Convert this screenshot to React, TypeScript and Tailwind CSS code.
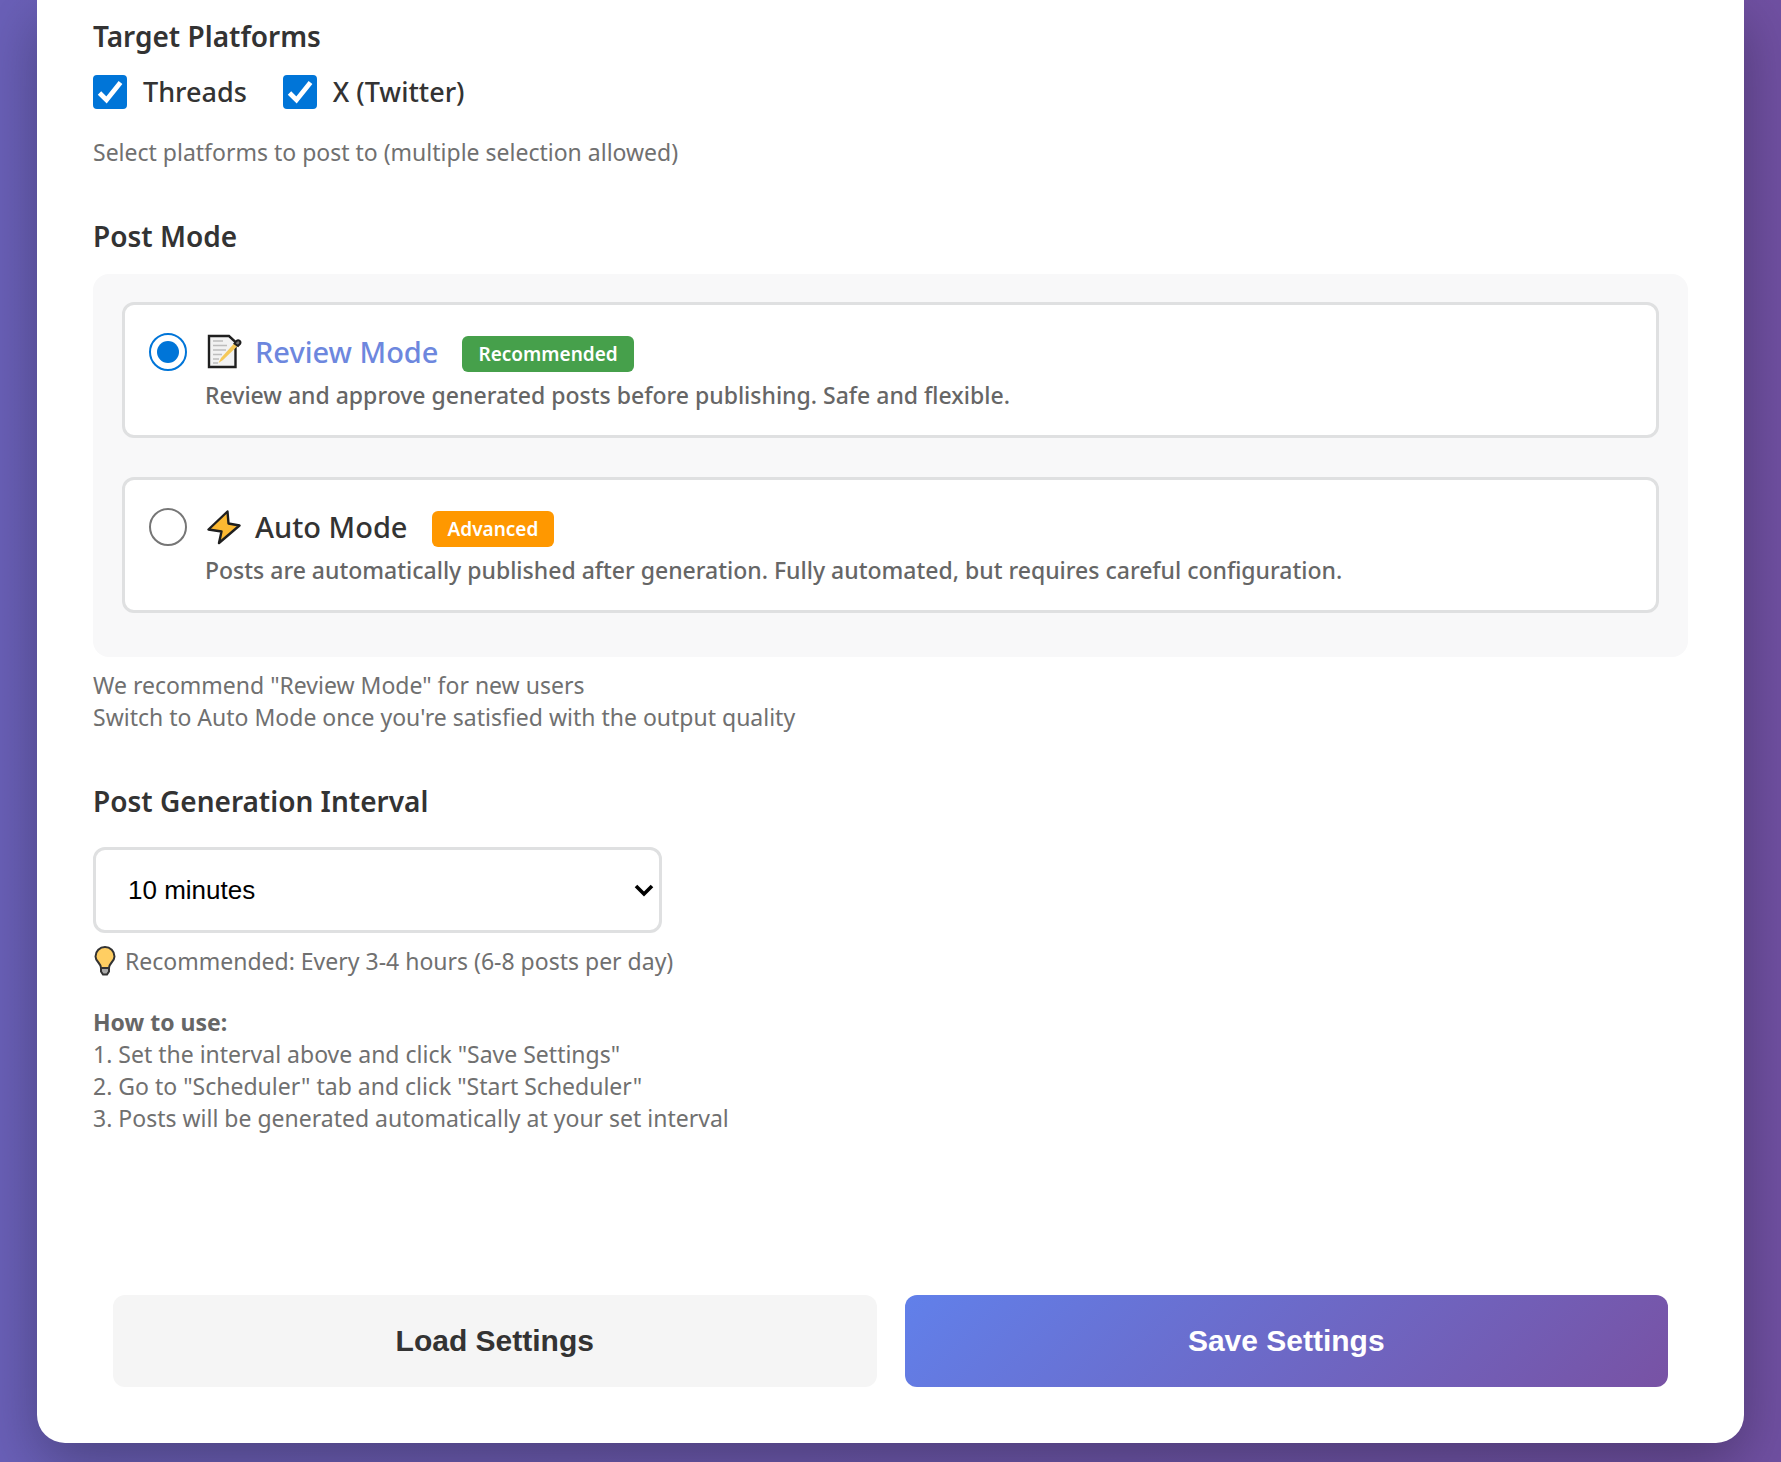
import { useState } from "react";
import type { ReactNode } from "react";

const HOW_TO_STEPS = [
  'Set the interval above and click "Save Settings"',
  'Go to "Scheduler" tab and click "Start Scheduler"',
  "Posts will be generated automatically at your set interval",
];

function MemoIcon() {
  return (
    <svg viewBox="0 0 36 36" className="ml-0.5 h-9 w-9 shrink-0" aria-hidden="true">
      <path d="M2 2h20l6.500 6v25H2z" fill="#f2f2f2" stroke="#1f1f1f" strokeWidth="2.400" />
      <path d="M6 7h10M6 11.500h14M6 16h13M6 20.500h9M6 25h6M6 29h5" stroke="#bdbdbd" strokeWidth="1.300" />
      <path d="M11.500 29l2.500-5L27.500 9l3 3L16 26z" fill="#f5c857" />
      <path
        d="M27.500 9.500l2-2.500c2-2 5 .5 3.500 3L31 12z"
        fill="#777"
        stroke="#1f1f1f"
        strokeWidth="2"
      />
    </svg>
  );
}

function BoltIcon() {
  return (
    <svg viewBox="0 0 36 36" className="ml-0.5 h-9 w-9 shrink-0" aria-hidden="true">
      <path
        d="M20.500 2.500L1.500 20.500l13 2L12 34 32.500 16.500 21.500 14.500z"
        fill="#fcb932"
        stroke="#1f1f1f"
        strokeWidth="2.400"
        strokeLinejoin="round"
      />
    </svg>
  );
}

function BulbIcon() {
  return (
    <svg viewBox="0 0 24 30" className="h-[30px] w-6 shrink-0" aria-hidden="true">
      <path d="M8 20h8v5.500l-2 3h-4l-2-3z" fill="#aaa" stroke="#333" strokeWidth="2" />
      <path
        d="M8 22C8 17 2.500 15.500 2.500 10.500a9.500 9.500 0 0 1 19 0C21.500 15.500 16 17 16 22z"
        fill="#ffce62"
        stroke="#333"
        strokeWidth="2"
      />
    </svg>
  );
}

function PlatformCheckbox({ label }: { label: string }) {
  const [checked, setChecked] = useState(true);

  return (
    <label className="flex items-center gap-4 text-[27px] leading-9 font-medium text-[#333]">
      <span className="grid h-[34px] w-[34px]">
        <input
          type="checkbox"
          checked={checked}
          onChange={(e) => setChecked(e.target.checked)}
          className="peer col-start-1 row-start-1 appearance-none rounded border-2 border-[#767676] checked:border-[#0075d8] checked:bg-[#0075d8]"
        />
        <svg
          viewBox="0 0 34 34"
          className="pointer-events-none invisible col-start-1 row-start-1 peer-checked:visible"
          aria-hidden="true"
        >
          <path d="M6.500 18l7 7L27.500 7.500" fill="none" stroke="#fff" strokeWidth="4.800" />
        </svg>
      </span>
      {label}
    </label>
  );
}

interface ModeOptionProps {
  value: string;
  title: string;
  description: string;
  icon: ReactNode;
  badge: string;
  badgeClass: string;
  titleClass: string;
  selected: string;
  onSelect: (value: string) => void;
}

function ModeOption({
  value,
  title,
  description,
  icon,
  badge,
  badgeClass,
  titleClass,
  selected,
  onSelect,
}: ModeOptionProps) {
  return (
    <label className="flex items-start gap-[18px] rounded-xl border-3 border-[#dfe0e1] bg-white px-6 pt-6 pb-5">
      <span className="mt-1 grid h-[38px] w-[38px] shrink-0">
        <input
          type="radio"
          name="post-mode"
          value={value}
          checked={selected === value}
          onChange={() => onSelect(value)}
          className="peer col-start-1 row-start-1 appearance-none rounded-full border-2 border-[#767676] bg-white checked:border-[#0075d8]"
        />
        <span className="pointer-events-none invisible col-start-1 row-start-1 m-2 rounded-full bg-[#0075d8] peer-checked:visible" />
      </span>
      <span className="flex flex-col">
        <span className="flex items-center">
          {icon}
          <span className={`ml-3 text-[29px] leading-[46px] font-medium ${titleClass}`}>{title}</span>
          <span
            className={`mt-1 ml-6 rounded-md px-4 text-[19px] leading-9 font-semibold text-white ${badgeClass}`}
          >
            {badge}
          </span>
        </span>
        <span className="text-[23px] leading-10 font-medium text-[#666]">{description}</span>
      </span>
    </label>
  );
}

export default function App() {
  const [mode, setMode] = useState("review");
  const [interval, setInterval] = useState("10");

  return (
    <div className="min-h-screen bg-linear-to-r from-[#6a60b8] to-[#7050a2] px-[37px] pb-[19px] font-['Noto_Sans','Open_Sans',sans-serif]">
      <main className="rounded-b-[28px] bg-white px-14 pt-4 pb-14 shadow-[0_20px_60px_rgba(0,0,0,0.3)]">
        <fieldset>
          <legend className="text-[28px] leading-10 font-semibold text-[#333]">Target Platforms</legend>
          <div className="mt-[18px] flex gap-9">
            <PlatformCheckbox label="Threads" />
            <PlatformCheckbox label="X (Twitter)" />
          </div>
          <p className="mt-[26px] text-[23px] leading-8 text-[#707070]">
            Select platforms to post to (multiple selection allowed)
          </p>
        </fieldset>

        <fieldset className="mt-12">
          <legend className="text-[28px] leading-10 font-semibold text-[#333]">Post Mode</legend>
          <div className="mt-[18px] flex flex-col gap-[39px] rounded-2xl bg-[#f8f8f9] px-[29px] pt-7 pb-11">
            <ModeOption
              value="review"
              title="Review Mode"
              description="Review and approve generated posts before publishing. Safe and flexible."
              icon={<MemoIcon />}
              badge="Recommended"
              badgeClass="bg-[#46a04b]"
              titleClass="text-[#6d87de]"
              selected={mode}
              onSelect={setMode}
            />
            <ModeOption
              value="auto"
              title="Auto Mode"
              description="Posts are automatically published after generation. Fully automated, but requires careful configuration."
              icon={<BoltIcon />}
              badge="Advanced"
              badgeClass="bg-[#ff9800]"
              titleClass="text-[#333]"
              selected={mode}
              onSelect={setMode}
            />
          </div>
          <p className="mt-3 text-[23px] leading-8 text-[#707070]">
            We recommend "Review Mode" for new users
            <br />
            Switch to Auto Mode once you're satisfied with the output quality
          </p>
        </fieldset>

        <section className="mt-12 text-[23px] leading-8 text-[#707070]">
          <label htmlFor="interval" className="block text-[28px] leading-10 font-semibold text-[#333]">
            Post Generation Interval
          </label>
          <div className="mt-[26px] grid w-full max-w-[569px] items-center">
            <select
              id="interval"
              value={interval}
              onChange={(e) => setInterval(e.target.value)}
              className="col-start-1 row-start-1 appearance-none rounded-xl border-3 border-[#dfe0e1] bg-white px-8 py-[22px] font-['Liberation_Sans',Arial,sans-serif] text-[26px] leading-9 text-black"
            >
              <option value="10">10 minutes</option>
              <option value="60">1 hour</option>
              <option value="180">3 hours</option>
              <option value="240">4 hours</option>
            </select>
            <svg
              viewBox="0 0 20 14"
              className="pointer-events-none col-start-1 row-start-1 mr-2 h-3.5 w-5 justify-self-end"
              aria-hidden="true"
            >
              <path d="M2 3l8 8 8-8" fill="none" stroke="#000" strokeWidth="3.600" />
            </svg>
          </div>
          <p className="mt-3 flex items-center gap-2">
            <BulbIcon />
            Recommended: Every 3-4 hours (6-8 posts per day)
          </p>
          <h2 className="mt-[29px] font-bold text-[#666]">How to use:</h2>
          <ol className="list-inside list-decimal">
            {HOW_TO_STEPS.map((step) => (
              <li key={step}>{step}</li>
            ))}
          </ol>
        </section>

        <div className="mt-[161px] grid grid-cols-2 gap-7 px-5 font-['Liberation_Sans',Arial,sans-serif] text-[30px] leading-9 font-bold">
          <button type="button" className="rounded-xl bg-[#f5f5f5] py-7 text-[#333]">
            Load Settings
          </button>
          <button
            type="button"
            className="rounded-xl bg-[linear-gradient(135deg,#6180ea,#7852a4)] py-7 text-white"
          >
            Save Settings
          </button>
        </div>
      </main>
    </div>
  );
}
